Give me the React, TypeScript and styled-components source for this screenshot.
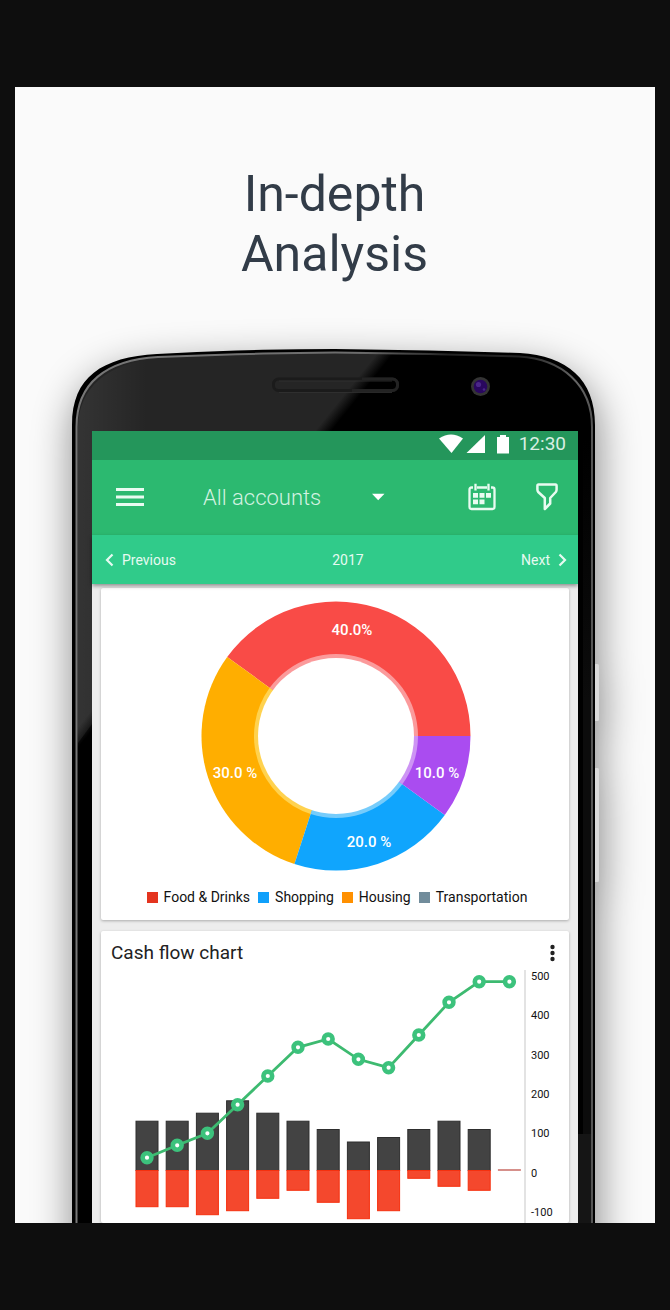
import React from "react";
import styled, { createGlobalStyle } from "styled-components";

const GlobalStyle = createGlobalStyle`
  * { box-sizing: border-box; }
  body { margin: 0; background: #0e0e0e; font-family: Roboto, "Liberation Sans", sans-serif; }
  button, select { font-family: inherit; }
`;

const Page = styled.main`
  min-height: 100vh;
  padding: 87px 15px;
  background: #0e0e0e;
`;

const Poster = styled.section`
  padding: 77px 60px 0 57px;
  overflow: hidden;
  background: #fafafa;
`;

const Headline = styled.h1`
  margin: 0 0 65px;
  padding-left: 2px;
  color: #323c48;
  font-size: 50px;
  font-weight: 400;
  line-height: 60px;
  text-align: center;
`;

const Phone = styled.div`
  position: relative;
  max-width: 523px;
  margin: 0 auto;
  padding: 82px 17px 0 20px;
`;

const PhoneBody = styled.svg`
  position: absolute;
  top: 0;
  left: 0;
  width: 100%;
  height: 960px;
  overflow: visible;
  filter: drop-shadow(2px 14px 20px rgba(0, 0, 0, 0.48));
`;

const Screen = styled.div`
  position: relative;
  background: #ededed;
`;

const StatusBar = styled.div`
  display: flex;
  align-items: center;
  justify-content: flex-end;
  height: 29px;
  padding: 0 12px 3px 0;
  background: #24965b;
`;

const StatusIcons = styled.svg`
  width: 70px;
  height: 20px;
  margin-right: 10px;
  fill: #fff;
`;

const Clock = styled.time`
  color: #d9efe3;
  font-size: 19px;
  line-height: 26px;
`;

const Toolbar = styled.header`
  display: flex;
  align-items: center;
  height: 75px;
  padding: 0 20px 2px 24px;
  background: #2cb970;
`;

const IconButton = styled.button<{ $width: number }>`
  display: flex;
  flex: none;
  width: ${(p) => p.$width}px;
  padding: 0;
  border: 0;
  background: none;
  color: ${(p) => p.color || "#e9fbf1"};
  cursor: pointer;
`;

const AccountPicker = styled.label`
  display: flex;
  align-items: center;
  flex: 0 1 182px;
  margin: 0 auto 0 59px;
`;

const AccountSelect = styled.select`
  flex: 1;
  min-width: 0;
  padding: 2px 0 0;
  border: 0;
  appearance: none;
  background: none;
  color: #d3f2e1;
  font-size: 22px;
  font-weight: 300;
  line-height: 28px;
`;

const Actions = styled.div`
  display: flex;
  align-items: center;
  gap: 40px;
`;

const PeriodBar = styled.nav`
  position: relative;
  display: grid;
  grid-template-columns: 1fr auto 1fr;
  align-items: center;
  height: 49px;
  padding: 0 11px 0 13px;
  background: #30cb8a;
  box-shadow: 0 2px 4px rgba(0, 0, 0, 0.4);
  color: #e6faf1;
  font-size: 14px;
  line-height: 20px;
`;

const PeriodButton = styled.button<{ $end?: boolean }>`
  display: flex;
  align-items: center;
  justify-self: ${(p) => (p.$end ? "end" : "start")};
  gap: 8px;
  padding: 0;
  border: 0;
  background: none;
  color: inherit;
  font-size: inherit;
  line-height: inherit;
  cursor: pointer;
`;

const Period = styled.span`
  padding-left: 24px;
`;

const Content = styled.div`
  display: flex;
  flex-direction: column;
  gap: 11px;
  padding: 4px 9px 0;
`;

const Card = styled.section`
  border-radius: 2px;
  background: #fff;
  box-shadow: 0 1px 3px rgba(0, 0, 0, 0.28);
`;

const DonutCard = styled(Card)`
  display: flex;
  flex-direction: column;
  align-items: center;
  padding: 12px 4px 13px;
`;

const Legend = styled.ul`
  display: flex;
  flex-wrap: wrap;
  justify-content: center;
  gap: 0 8px;
  margin: 15px 0 0;
  padding: 0 0 0 4px;
  list-style: none;
`;

const LegendItem = styled.li<{ $color: string }>`
  display: flex;
  align-items: center;
  gap: 6px;
  color: #111;
  font-size: 14px;
  line-height: 20px;

  &::before {
    content: "";
    width: 11px;
    height: 11px;
    background: ${(p) => p.$color};
  }
`;

const CardHeader = styled.div`
  display: flex;
  align-items: center;
  justify-content: space-between;
  height: 39px;
  padding: 5px 14px 0 10px;
`;

const CardTitle = styled.h2`
  margin: 0;
  color: #222;
  font-size: 19px;
  font-weight: 400;
  line-height: 28px;
`;

const ChartDrawing = styled.svg`
  display: block;
  width: 100%;
`;

const donutSlices = [
  { from: 0, to: 144, color: "#f94b47", inner: "#fb9a9b", label: "40.0%", x: 151, y: 34 },
  { from: 144, to: 252, color: "#ffae00", inner: "#ffd24f", label: "30.0 %", x: 34, y: 177 },
  { from: 252, to: 324, color: "#10a5fd", inner: "#76ccfb", label: "20.0 %", x: 168, y: 246 },
  { from: 324, to: 360, color: "#aa4cf0", inner: "#cd94f4", label: "10.0 %", x: 236, y: 177 },
];

const legend = [
  { name: "Food & Drinks", color: "#e4341f" },
  { name: "Shopping", color: "#10a0fb" },
  { name: "Housing", color: "#ff9000" },
  { name: "Transportation", color: "#718c9b" },
];

const CX = 135;
const CY = 136;

function sector(from: number, to: number, r: number) {
  const point = (deg: number) => {
    const a = (deg * Math.PI) / 180;
    return `${(CX + r * Math.cos(a)).toFixed(2)} ${(CY - r * Math.sin(a)).toFixed(2)}`;
  };
  return `M${CX} ${CY}L${point(from)}A${r} ${r} 0 0 0 ${point(to)}Z`;
}

function Donut() {
  return (
    <svg width="272" height="272" viewBox="-2 0 272 272" role="img" aria-label="Spending by category">
      {donutSlices.map((s) => (
        <path key={s.from} d={sector(s.from, s.to, 134.5)} fill={s.color} />
      ))}
      {donutSlices.map((s) => (
        <path key={s.from} d={sector(s.from, s.to, 82)} fill={s.inner} />
      ))}
      <circle cx={CX} cy={CY} r="78" fill="#fff" />
      <g fill="#fff" fontSize="15" fontWeight="500" textAnchor="middle">
        {donutSlices.map((s) => (
          <text key={s.from} x={s.x} y={s.y + 1}>{s.label}</text>
        ))}
      </g>
    </svg>
  );
}

const months = [
  { income: 49.3, expense: 36.7, balance: 187.7 },
  { income: 49.3, expense: 36.7, balance: 175.3 },
  { income: 57.3, expense: 44.7, balance: 163.3 },
  { income: 69.7, expense: 40.7, balance: 134.7 },
  { income: 57.3, expense: 28.3, balance: 106 },
  { income: 49.3, expense: 20.3, balance: 77.3 },
  { income: 41, expense: 32.3, balance: 69 },
  { income: 28.5, expense: 48.7, balance: 89.3 },
  { income: 33, expense: 40.7, balance: 97.7 },
  { income: 41, expense: 8.3, balance: 65 },
  { income: 49.3, expense: 16.3, balance: 32.3 },
  { income: 41, expense: 20.3, balance: 11.7 },
  { income: 0, expense: 0, balance: 11.7 },
];

const ZERO = 200;
const monthX = (i: number) => 46 + i * 30.2;

function CashFlowChart() {
  return (
    <ChartDrawing viewBox="0 0 468 253" role="img" aria-label="Income, expenses and balance by month">
      <line x1="424" y1="0" x2="424" y2="253" stroke="#dcdcdc" strokeWidth="1.6" />
      {months.map((m, i) =>
        m.income ? (
          <g key={i}>
            <rect x={monthX(i) - 11} y={ZERO - m.income + 0.5} width="22" height={m.income} fill="#434343" stroke="#2e2e2e" />
            <rect x={monthX(i) - 11} y={ZERO + 0.5} width="22" height={m.expense - 0.5} fill="#f4482d" stroke="#f5300e" />
          </g>
        ) : (
          <line key={i} x1={monthX(i) - 11.5} x2={monthX(i) + 11.5} y1={ZERO} y2={ZERO} stroke="#c4605a" strokeWidth="1.4" />
        )
      )}
      <polyline
        points={months.map((m, i) => `${monthX(i)},${m.balance}`).join(" ")}
        fill="none"
        stroke="#3dba70"
        strokeWidth="2.8"
      />
      {months.map((m, i) => (
        <circle key={i} cx={monthX(i)} cy={m.balance} r="4.4" fill="#fff" stroke="#3cc27c" strokeWidth="4.6" />
      ))}
      <g fill="#111" fontSize="11">
        {[500, 400, 300, 200, 100, 0, -100].map((v, i) => (
          <text key={v} x="430" y={10 + i * 39.3}>{v}</text>
        ))}
      </g>
    </ChartDrawing>
  );
}

function PhoneShell() {
  return (
    <PhoneBody viewBox="0 0 523 960" preserveAspectRatio="none" aria-hidden="true">
      <defs>
        <linearGradient id="glare" gradientUnits="userSpaceOnUse" x1="243" y1="82" x2="253" y2="90">
          <stop offset="0" stopColor="#252525" />
          <stop offset="1" stopColor="#000" />
        </linearGradient>
        <linearGradient id="rim" x1="0" x2="1" y1="0" y2="0">
          <stop offset="0" stopColor="#777" />
          <stop offset="0.55" stopColor="#6c6c6c" />
          <stop offset="0.72" stopColor="#242424" />
          <stop offset="0.87" stopColor="#242424" />
          <stop offset="0.97" stopColor="#666" />
          <stop offset="1" stopColor="#555" />
        </linearGradient>
        <linearGradient id="side" gradientUnits="userSpaceOnUse" x1="5" x2="75" y1="0" y2="0">
          <stop offset="0" stopColor="#fff" stopOpacity="0.07" />
          <stop offset="1" stopColor="#fff" stopOpacity="0" />
        </linearGradient>
        <linearGradient id="edge" x1="0" x2="0" y1="0" y2="1">
          <stop offset="0" stopColor="#000" />
          <stop offset="0.3" stopColor="#0c0c0c" />
          <stop offset="1" stopColor="#0c0c0c" />
        </linearGradient>
      </defs>
      <rect x="522" y="315" width="5" height="57" rx="1.5" fill="#dadada" />
      <rect x="522" y="419" width="5" height="114" rx="1.5" fill="#dadada" />
      <path d="M0 76C0 28 30 8 85 5Q175 0 263 0Q360 1 448 4C495 7 523 30 523 76V960H0Z" fill="#000" />
      <path
        d="M4.500 78C4.500 34 34 11 86 8Q175 4 263 3.500Q360 4.500 447 7.500C490 10 520 36 520 78V960H4.500Z"
        fill="url(#glare)"
        stroke="url(#rim)"
        strokeWidth="2"
      />
      <path d="M6 78C7 38 36 14 84 10L75 82V300L6 394Z" fill="url(#side)" />
      <rect x="511" y="90" width="8" height="870" fill="url(#edge)" />
      <rect x="506" y="785" width="13" height="175" fill="#151515" />
      <rect x="201.500" y="30" width="124" height="11.500" rx="5" fill="none" stroke="#1b1b1b" strokeWidth="3" />
      <path d="M207 32H320M207 43.500H320" stroke="#323232" strokeWidth="0.8" />
      <path d="M290 30H320.500A5 5 0 0 1 325.500 35V36.500A5 5 0 0 1 320.500 41.500H280" fill="none" stroke="#232323" strokeWidth="3" />
      <circle cx="408.500" cy="37.500" r="9.500" fill="#343434" />
      <circle cx="408.500" cy="37.500" r="6.800" fill="#29075f" />
      <circle cx="406.500" cy="35.500" r="2.600" fill="#4a2688" />
      <circle cx="412" cy="40.500" r="1.300" fill="#4a2688" />
    </PhoneBody>
  );
}

function Chevron({ d }: { d: string }) {
  return (
    <svg width="9" height="14" viewBox="0 0 9 14" fill="none" stroke="currentColor" strokeWidth="2.200" aria-hidden="true">
      <path d={d} />
    </svg>
  );
}

export default function App() {
  return (
    <Page>
      <GlobalStyle />
      <Poster>
        <Headline>
          In-depth
          <br />
          Analysis
        </Headline>
        <Phone>
          <PhoneShell />
          <Screen>
            <StatusBar>
              <StatusIcons viewBox="0 0 70 20" aria-hidden="true">
                <path d="M0 4.500Q12-3.500 24 4.500L12.500 19Z" />
                <path d="M46 1V19H27.500Z" />
                <path d="M58 3H61V1H67V3H70V19.500H58Z" />
              </StatusIcons>
              <Clock>12:30</Clock>
            </StatusBar>
            <Toolbar>
              <IconButton $width={28} aria-label="Open menu">
                <svg width="28" height="20" viewBox="0 0 28 20" fill="none" stroke="currentColor" strokeWidth="2.800">
                  <path d="M0 2.500H28M0 10H28M0 17.500H28" />
                </svg>
              </IconButton>
              <AccountPicker>
                <AccountSelect aria-label="Account" defaultValue="all">
                  <option value="all">All accounts</option>
                </AccountSelect>
                <svg width="14" height="8" viewBox="0 0 14 8" aria-hidden="true">
                  <path d="M1 0.800H13.500L7.200 7.200Z" fill="#fff" />
                </svg>
              </AccountPicker>
              <Actions>
                <IconButton $width={28} aria-label="Choose dates">
                  <svg width="28" height="28" viewBox="0 0 28 28" fill="none" stroke="currentColor" strokeWidth="2.300">
                    <path d="M5 4.500H3.500Q1.500 4.500 1.500 6.500V24Q1.500 26 3.500 26H24.500Q26.500 26 26.500 24V6.500Q26.500 4.500 24.500 4.500H23M9 4.500H19" />
                    <path d="M7.500 0.800V7.500M20.500 0.800V7.500" />
                    <path d="M5 10h5v4.800H5zM11.500 10h5v4.800h-5zM18 10h5v4.800H18zM5 16.400h5v4.800H5zM11.500 16.400h5v4.800h-5z" fill="currentColor" stroke="none" />
                  </svg>
                </IconButton>
                <IconButton $width={22} aria-label="Filter">
                  <svg width="22" height="28" viewBox="0 0 22 28" fill="none" stroke="currentColor" strokeWidth="2.500" strokeLinejoin="round">
                    <path d="M2.500 1.500H19.500Q20.600 1.500 20.600 3V6.500Q20.600 8 19.800 9L14.200 15V20.500L8.800 26V15L2.200 9Q1.400 8 1.400 6.500V3Q1.400 1.500 2.500 1.500Z" />
                  </svg>
                </IconButton>
              </Actions>
            </Toolbar>
            <PeriodBar aria-label="Period">
              <PeriodButton>
                <Chevron d="M7.500 1.500L2 7L7.500 12.500" />
                Previous
              </PeriodButton>
              <Period>2017</Period>
              <PeriodButton $end>
                Next
                <Chevron d="M1.500 1.500L7 7L1.500 12.500" />
              </PeriodButton>
            </PeriodBar>
            <Content>
              <DonutCard>
                <Donut />
                <Legend>
                  {legend.map((l) => (
                    <LegendItem key={l.name} $color={l.color}>{l.name}</LegendItem>
                  ))}
                </Legend>
              </DonutCard>
              <Card>
                <CardHeader>
                  <CardTitle>Cash flow chart</CardTitle>
                  <IconButton $width={5} color="#222" aria-label="More options">
                    <svg width="5" height="18" viewBox="0 0 5 18" fill="currentColor">
                      <circle cx="2.500" cy="3" r="2.200" />
                      <circle cx="2.500" cy="9" r="2.200" />
                      <circle cx="2.500" cy="15" r="2.200" />
                    </svg>
                  </IconButton>
                </CardHeader>
                <CashFlowChart />
              </Card>
            </Content>
          </Screen>
        </Phone>
      </Poster>
    </Page>
  );
}
